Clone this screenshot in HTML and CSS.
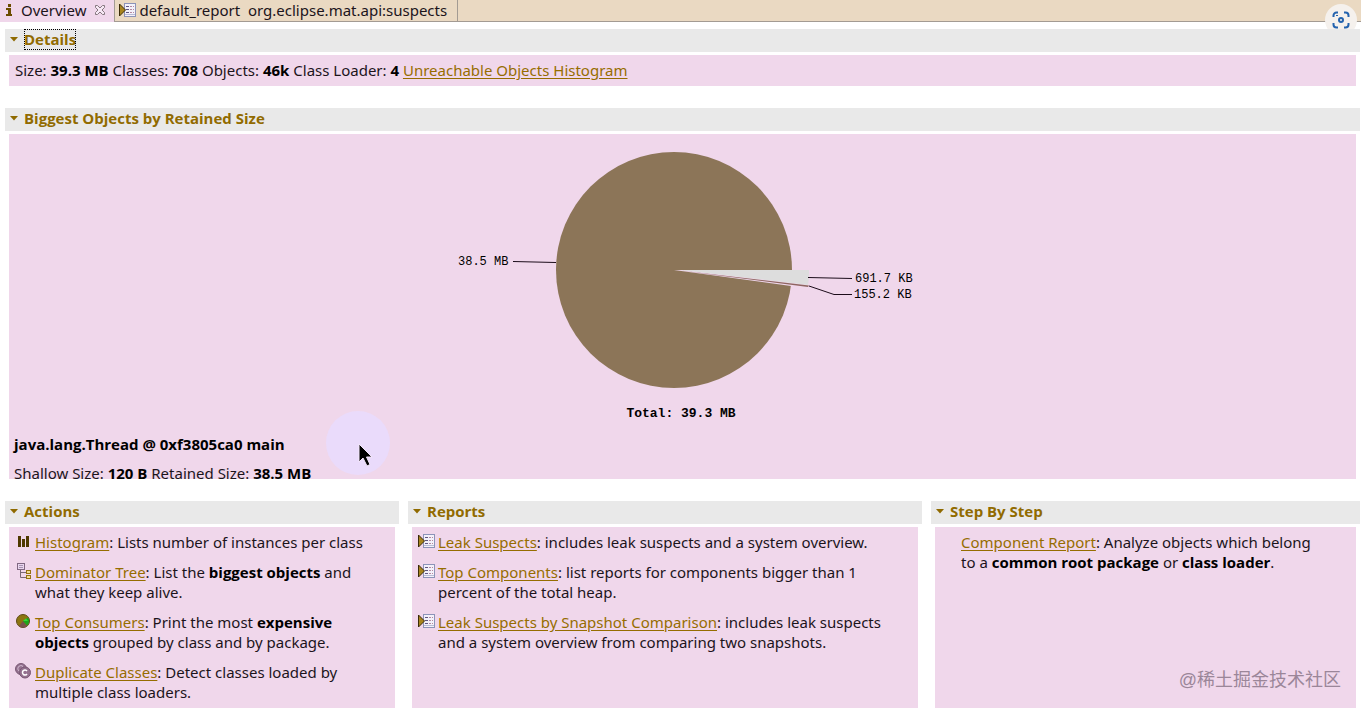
FILE: index.html
```
<!DOCTYPE html>
<html lang="en">
<head>
    <meta charset="UTF-8">
    <meta name="viewport" content="width=device-width, initial-scale=1.0">
    <title>Overview</title>
    <link rel="stylesheet" href="styles.css">
</head>
<body>
    <!-- shared icons -->
    <svg class="icon-defs" aria-hidden="true">
        <symbol id="icon-report" viewBox="0 0 17 16">
            <rect x="5.5" y="1.5" width="11" height="13" fill="#f3f1fa" stroke="#8c93b8"/>
            <path d="M7 4.500h3M7 7.500h3M7 10.500h3" stroke="#5f5680"/>
            <path d="M11 4.500h4M11 7.500h4M11 10.500h4" stroke="#b58aa0" stroke-dasharray="2 1"/>
            <path d="M6 12.500h10" stroke="#b9bbd6"/>
            <path d="M.5 2v12l6-6z" fill="#a8841c" stroke="#3b2c08"/>
        </symbol>
        <symbol id="icon-arrow" viewBox="0 0 8 5">
            <path d="M0 0h8L4 4.500z" fill="#8f6a00"/>
        </symbol>
    </svg>

    <div class="tab-bar" role="tablist">
        <div class="tab active">
            <button class="tab-btn" role="tab" aria-selected="true">
                <svg class="info-icon" viewBox="0 0 6 12"><path d="M2 0h3v3H2zM0 4h5v6h1v2H0v-2h2V6H0z" fill="#6b4c00"/></svg>
                Overview
            </button>
            <button class="close-btn" aria-label="Close">
                <svg width="12" height="12" viewBox="0 0 12 12"><path d="M1.500 1.500h2L6 4l2.500-2.500h2v2L8 6l2.500 2.500v2h-2L6 8l-2.500 2.500h-2v-2L4 6 1.500 3.500z" fill="#f7e8f5" stroke="#85787f"/></svg>
            </button>
        </div>
        <div class="tab">
            <button class="tab-btn" role="tab" aria-selected="false">
                <svg class="report-icon"><use href="#icon-report"/></svg>
                default_report&nbsp; org.eclipse.mat.api:suspects
            </button>
        </div>
    </div>

    <button class="capture-btn" aria-label="Capture">
        <svg width="18" height="18" viewBox="0 0 18 18" fill="none" stroke="#2463ae" stroke-width="2">
            <path d="M1.500 6V4.500a3 3 0 0 1 3-3H6M12 1.500h1.500a3 3 0 0 1 3 3V6M16.500 12v1.500a3 3 0 0 1-3 3H12M6 16.500H4.500a3 3 0 0 1-3-3V12"/>
            <circle cx="9" cy="9" r="2"/>
            <path d="M4 4.500h2" stroke-width="1"/>
        </svg>
    </button>

    <main class="overview">
        <section class="section">
            <h2 class="section-head">
                <button class="toggle focused"><svg class="arrow"><use href="#icon-arrow"/></svg><span>Details</span></button>
            </h2>
            <div class="section-body details">
                Size: <b>39.3 MB</b> Classes: <b>708</b> Objects: <b>46k</b> Class Loader: <b>4</b> <a href="#">Unreachable Objects Histogram</a>
            </div>
        </section>

        <section class="section">
            <h2 class="section-head">
                <button class="toggle"><svg class="arrow"><use href="#icon-arrow"/></svg><span>Biggest Objects by Retained Size</span></button>
            </h2>
            <div class="section-body biggest">
                <svg class="pie" viewBox="0 0 485 296" role="img" aria-label="Retained size by object">
                    <circle cx="234" cy="136" r="118" fill="#8c7558"/>
                    <!-- gap left by the two pulled out slices -->
                    <path d="M234 136H353V153L351 152z" fill="#f0d7eb"/>
                    <path d="M240 136H369V144L368 151z" fill="#dddddd"/>
                    <path d="M240 136.500L369 151.500L368 153z" fill="#8e6560"/>
                    <g fill="none" stroke="#1c0c1a">
                        <path d="M73 127.500L116 128.500"/>
                        <path d="M368 143.500L412 144.500"/>
                        <path d="M369 152L394 160.500H412"/>
                    </g>
                    <text x="18" y="131">38.5 MB</text>
                    <text x="415" y="148">691.7 KB</text>
                    <text x="414" y="164">155.2 KB</text>
                    <text class="total" x="241" y="283" text-anchor="middle">Total: 39.3 MB</text>
                </svg>
                <div class="object-info">
                    <p><b>java.lang.Thread @ 0xf3805ca0 main</b></p>
                    <p>Shallow Size: <b>120 B</b> Retained Size: <b>38.5 MB</b></p>
                </div>
                <div class="pointer">
                    <svg width="14" height="24" viewBox="0 0 14 24"><path d="M1 1v18l4-4 4 8 3-1.500-3.500-7.500H14z" fill="#000" stroke="#f4e6fa"/></svg>
                </div>
            </div>
        </section>

        <div class="columns">
            <section class="section">
                <h2 class="section-head">
                    <button class="toggle"><svg class="arrow"><use href="#icon-arrow"/></svg><span>Actions</span></button>
                </h2>
                <ul class="section-body links">
                    <li>
                        <svg class="item-icon" viewBox="0 0 17 16"><path d="M3 3h3v11H3zM7 6h3v8H7zM11 3h3v11h-3z" fill="#4f3900"/></svg>
                        <span><a href="#">Histogram</a>: Lists number of instances per class</span>
                    </li>
                    <li>
                        <svg class="item-icon" viewBox="0 0 17 16" fill="none">
                            <path d="M5.500 7v7.500H11M5.500 9.500H11" stroke="#7b6876"/>
                            <rect x="2.500" y=".5" width="7" height="6" fill="#ead7ef" stroke="#806882"/>
                            <path d="M4 2.500h4M4 4.500h4" stroke="#a894b2"/>
                            <rect x="11.500" y="7.500" width="4" height="3" fill="#f1dc93" stroke="#977213"/>
                            <rect x="11.500" y="12.500" width="4" height="3" fill="#f1dc93" stroke="#977213"/>
                        </svg>
                        <span><a href="#">Dominator Tree</a>: List the <b>biggest objects</b> and what they keep alive.</span>
                    </li>
                    <li>
                        <svg class="item-icon" viewBox="0 0 17 16">
                            <circle cx="8" cy="8" r="6.500" fill="#8d7510" stroke="#5e4a17"/>
                            <path d="M8 8L4 13a6 6 0 0 0 8 0z" fill="#79534c"/>
                            <path d="M8 8l5-3.500a6 6 0 0 1-1 8z" fill="#1da51e"/>
                            <path d="M8 8l3-2.500 2 2.500z" fill="#36dc35"/>
                        </svg>
                        <span><a href="#">Top Consumers</a>: Print the most <b>expensive objects</b> grouped by class and by package.</span>
                    </li>
                    <li>
                        <svg class="item-icon" viewBox="0 0 17 16">
                            <circle cx="6" cy="6" r="5.500" fill="#94718f" stroke="#795874"/>
                            <path d="M8 3.500a3 3 0 1 0-3 5" fill="none" stroke="#d9c3d8"/>
                            <circle cx="10" cy="9.500" r="5.500" fill="#94718f" stroke="#795874"/>
                            <path d="M12 8a2.500 2.500 0 1 0 0 3" fill="none" stroke="#fff" stroke-width="1.500"/>
                        </svg>
                        <span><a href="#">Duplicate Classes</a>: Detect classes loaded by multiple class loaders.</span>
                    </li>
                </ul>
            </section>

            <section class="section">
                <h2 class="section-head">
                    <button class="toggle"><svg class="arrow"><use href="#icon-arrow"/></svg><span>Reports</span></button>
                </h2>
                <ul class="section-body links">
                    <li>
                        <svg class="item-icon"><use href="#icon-report"/></svg>
                        <span><a href="#">Leak Suspects</a>: includes leak suspects and a system overview.</span>
                    </li>
                    <li>
                        <svg class="item-icon"><use href="#icon-report"/></svg>
                        <span><a href="#">Top Components</a>: list reports for components bigger than 1 percent of the total heap.</span>
                    </li>
                    <li>
                        <svg class="item-icon"><use href="#icon-report"/></svg>
                        <span><a href="#">Leak Suspects by Snapshot Comparison</a>: includes leak suspects and a system overview from comparing two snapshots.</span>
                    </li>
                </ul>
            </section>

            <section class="section">
                <h2 class="section-head">
                    <button class="toggle"><svg class="arrow"><use href="#icon-arrow"/></svg><span>Step By Step</span></button>
                </h2>
                <ul class="section-body links no-icons">
                    <li>
                        <span><a href="#">Component Report</a>: Analyze objects which belong to a <b>common root package</b> or <b>class loader</b>.</span>
                    </li>
                </ul>
                <div class="watermark" lang="zh">@稀土掘金技术社区</div>
            </section>
        </div>
    </main>
</body>
</html>
```

FILE: styles.css
```
* {
    box-sizing: border-box;
}
body {
    margin: 0;
    background: #fff;
    color: #1c141b;
    font-family: "Noto Sans", "Open Sans", sans-serif;
    font-size: 15px;
    line-height: 20px;
}
button {
    font: inherit;
    color: inherit;
    border: none;
    background: none;
    padding: 0;
    cursor: pointer;
}
a {
    color: #966d00;
    text-underline-offset: 2px;
}
b {
    color: #000;
    font-family: "Open Sans", sans-serif;
    line-height: 16px;
}
.icon-defs {
    position: absolute;
    width: 0;
    height: 0;
}

/* tabs */
.tab-bar {
    display: flex;
    height: 22px;
    background: #ead9c2;
    border-bottom: 1px solid #a39b93;
}
.tab {
    display: flex;
    align-items: flex-start;
    gap: 8px;
    padding: 0 10px 0 4px;
    border-right: 1px solid #a39b93;
    white-space: nowrap;
}
.tab.active {
    height: 22px;
    padding: 0 8px 0 6px;
    background: #f0d7eb;
}
.tab-btn {
    display: flex;
    align-items: center;
    gap: 3px;
    height: 20px;
}
.active .tab-btn {
    gap: 9px;
}
.close-btn {
    display: flex;
    align-items: center;
    height: 20px;
}
.info-icon {
    width: 6px;
    height: 12px;
}
.report-icon {
    width: 17px;
    height: 16px;
}
.capture-btn {
    position: absolute;
    top: 4px;
    right: 4px;
    display: flex;
    align-items: center;
    justify-content: center;
    width: 32px;
    height: 32px;
    border-radius: 50%;
    background: #f5f1ed;
}

/* sections */
.overview {
    display: flex;
    flex-direction: column;
    gap: 22px;
    padding: 7px 1px 2px 5px;
}
.section {
    display: flex;
    flex-direction: column;
    gap: 3px;
    position: relative;
}
.section-head {
    display: flex;
    align-items: flex-start;
    margin: 0;
    height: 23px;
    padding: 0 5px;
    background: #e9e9e9;
}
.toggle {
    display: flex;
    align-items: center;
    gap: 6px;
    color: #916b00;
    font-family: "Open Sans", sans-serif;
    font-size: 15px;
    font-weight: bold;
    line-height: 21px;
}
.toggle.focused span {
    outline: 1px dotted #000;
    outline-offset: -1px;
}
.arrow {
    width: 8px;
    height: 5px;
}
.section-body {
    margin: 0 4px;
    background: #f0d7eb;
}
.details {
    padding: 5px 6px 6px;
}

/* pie chart */
.biggest {
    position: relative;
    height: 345px;
    overflow: hidden;
}
.pie {
    display: block;
    width: 485px;
    height: 296px;
    margin: 0 auto;
    font-family: "Liberation Mono", monospace;
    font-size: 12px;
}
.total {
    font-size: 13px;
    font-weight: bold;
}
.object-info {
    padding: 4px 5px;
}
.object-info p {
    margin: 0 0 9px;
}
.pointer {
    position: absolute;
    left: 317px;
    top: 277px;
    width: 64px;
    height: 64px;
    padding: 32px 0 0 32px;
    border-radius: 50%;
    background: #eadbfb;
}

/* bottom columns */
.columns {
    display: grid;
    grid-template-columns: 394fr 514fr 429fr;
    gap: 9px;
}
.links {
    flex: 1;
    display: flex;
    flex-direction: column;
    gap: 10px;
    padding: 5px 10px 6px 6px;
    list-style: none;
}
.links li {
    display: flex;
    gap: 3px;
}
.item-icon {
    flex: none;
    width: 17px;
    height: 16px;
    margin-top: 1px;
}
.no-icons {
    padding-left: 26px;
    padding-right: 36px;
}
.watermark {
    position: absolute;
    right: 19px;
    bottom: 16px;
    color: #9b8699;
    font-family: "Liberation Sans", "Noto Sans CJK SC", sans-serif;
    font-size: 18px;
    line-height: 24px;
}
```
